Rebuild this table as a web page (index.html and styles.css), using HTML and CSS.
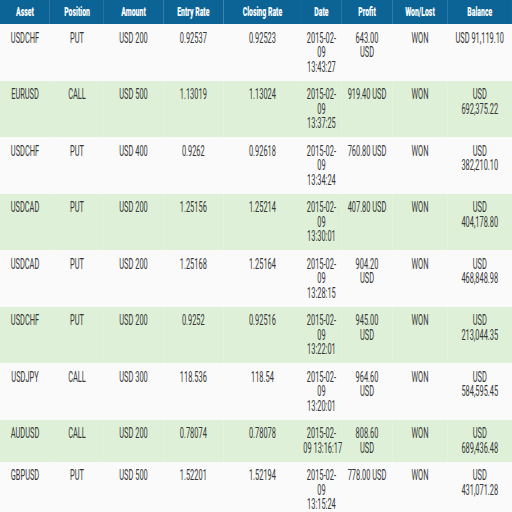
FILE: index.html
```html
<!DOCTYPE html>
<html>
<head>
<meta charset="utf-8">
<link rel="stylesheet" href="styles.css">
</head>
<body>
<div class="frame">
<div class="sheet">
<table class="trades">
<colgroup>
<col class="c-asset"><col class="c-pos"><col class="c-amt"><col class="c-entry"><col class="c-close"><col class="c-date"><col class="c-profit"><col class="c-won"><col class="c-bal">
</colgroup>
<thead>
<tr><th>Asset</th><th>Position</th><th>Amount</th><th>Entry Rate</th><th>Closing Rate</th><th>Date</th><th>Profit</th><th>Won/Lost</th><th>Balance</th></tr>
</thead>
<tbody>
<tr><td>USDCHF</td><td>PUT</td><td>USD 200</td><td>0.92537</td><td>0.92523</td><td>2015-02-<br>09<br>13:43:27</td><td>643.00<br>USD</td><td>WON</td><td>USD 91,119.10</td></tr>
<tr class="success"><td>EURUSD</td><td>CALL</td><td>USD 500</td><td>1.13019</td><td>1.13024</td><td>2015-02-<br>09<br>13:37:25</td><td>919.40 USD</td><td>WON</td><td>USD<br>692,375.22</td></tr>
<tr><td>USDCHF</td><td>PUT</td><td>USD 400</td><td>0.9262</td><td>0.92618</td><td>2015-02-<br>09<br>13:34:24</td><td>760.80 USD</td><td>WON</td><td>USD<br>382,210.10</td></tr>
<tr class="success"><td>USDCAD</td><td>PUT</td><td>USD 200</td><td>1.25156</td><td>1.25214</td><td>2015-02-<br>09<br>13:30:01</td><td>407.80 USD</td><td>WON</td><td>USD<br>404,178.80</td></tr>
<tr><td>USDCAD</td><td>PUT</td><td>USD 200</td><td>1.25168</td><td>1.25164</td><td>2015-02-<br>09<br>13:28:15</td><td>904.20<br>USD</td><td>WON</td><td>USD<br>468,848.98</td></tr>
<tr class="success"><td>USDCHF</td><td>PUT</td><td>USD 200</td><td>0.9252</td><td>0.92516</td><td>2015-02-<br>09<br>13:22:01</td><td>945.00<br>USD</td><td>WON</td><td>USD<br>213,044.35</td></tr>
<tr><td>USDJPY</td><td>CALL</td><td>USD 300</td><td>118.536</td><td>118.54</td><td>2015-02-<br>09<br>13:20:01</td><td>964.60<br>USD</td><td>WON</td><td>USD<br>584,595.45</td></tr>
<tr class="success"><td>AUDUSD</td><td>CALL</td><td>USD 200</td><td>0.78074</td><td>0.78078</td><td>2015-02-<br>09 13:16:17</td><td>808.60<br>USD</td><td>WON</td><td>USD<br>689,436.48</td></tr>
<tr><td>GBPUSD</td><td>PUT</td><td>USD 500</td><td>1.52201</td><td>1.52194</td><td>2015-02-<br>09<br>13:15:24</td><td>778.00 USD</td><td>WON</td><td>USD<br>431,071.28</td></tr>
</tbody>
</table>
</div>
</div>
</body>
</html>
```

FILE: styles.css
```css
html, body {
  margin: 0;
  padding: 0;
  overflow: hidden;
  background: #fafafa;
}

.frame {
  width: 512px;
  height: 512px;
  overflow: hidden;
}

.sheet {
  width: 966px;
  transform: scaleX(0.53);
  transform-origin: 0 0;
}

.trades {
  width: 100%;
  table-layout: fixed;
  border-collapse: collapse;
  font-family: Roboto, "Liberation Sans", sans-serif;
  color: #363636;
}

.c-asset { width: 9.77%; }
.c-pos { width: 10.55%; }
.c-amt { width: 11.52%; }
.c-entry { width: 11.84%; }
.c-close { width: 15.16%; }
.c-date { width: 7.89%; }
.c-profit { width: 9.92%; }
.c-won { width: 10.78%; }
.c-bal { width: 12.57%; }

.trades th {
  background: #0b6396;
  color: #ffffff;
  font-size: 13px;
  font-weight: 900;
  line-height: 14px;
  padding: 5px 4px;
  text-align: center;
  white-space: nowrap;
}

.trades td {
  font-size: 14px;
  font-weight: 400;
  line-height: 14.5px;
  padding: 6.5px 4px;
  text-align: center;
  vertical-align: top;
  white-space: nowrap;
  background: #fafafa;
}

.trades tr.success td {
  background: #dff0d8;
}
```
